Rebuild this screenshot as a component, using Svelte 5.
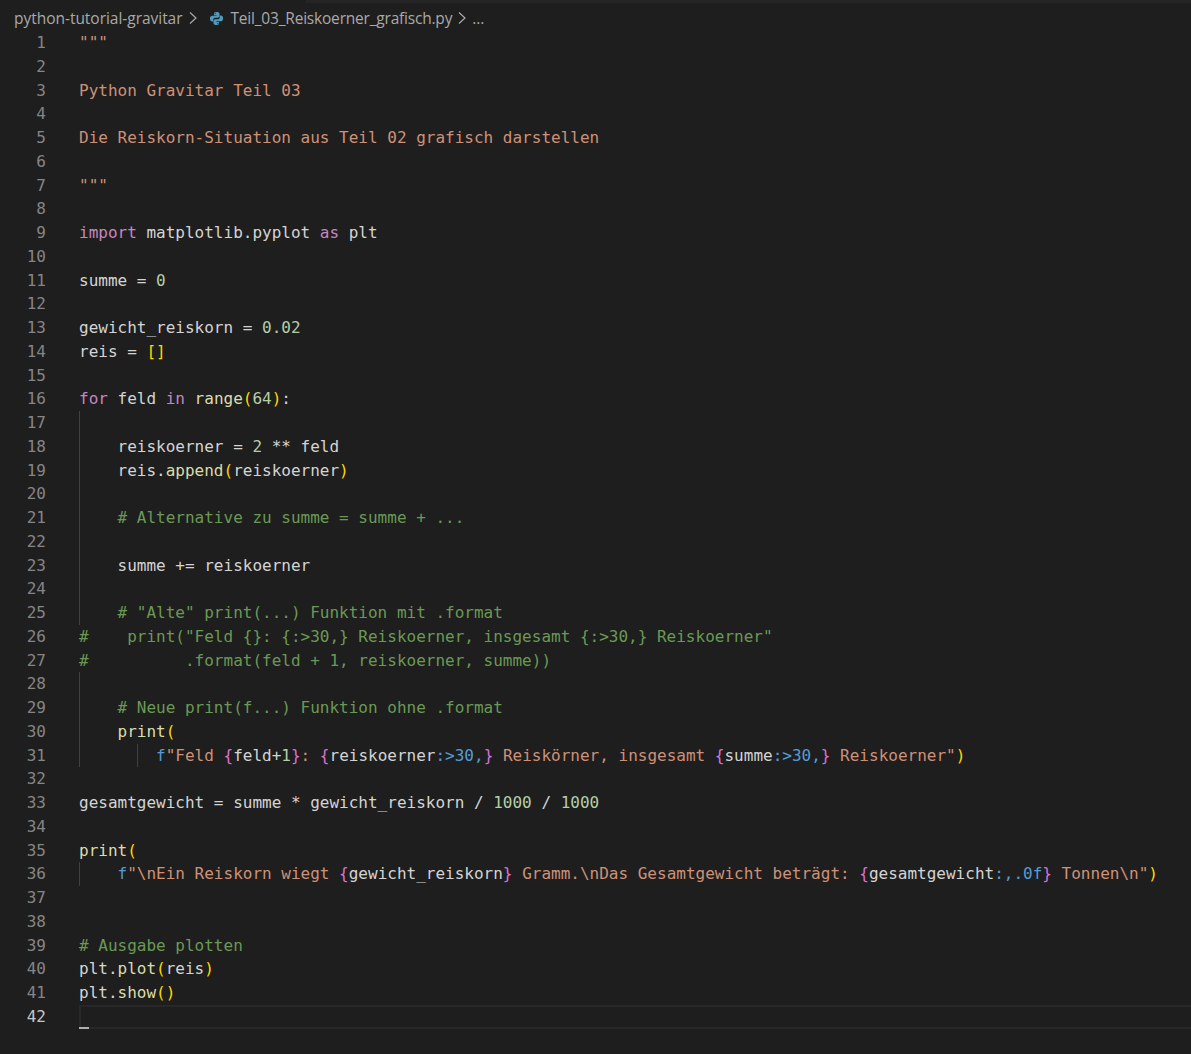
<script>
  const c = (t) => ['cm', t];
  const s = (t) => ['st', t];
  const o = (t) => ['tx', t];
  const k = (t) => ['kw', t];
  const f = (t) => ['fn', t];
  const n = (t) => ['nm', t];
  const g = (t) => ['gold', t];
  const p = (t) => ['pink', t];
  const b = (t) => ['blue', t];

  const lines = [
    { t: [s('"""')] },
    { t: [] },
    { t: [s('Python Gravitar Teil 03')] },
    { t: [] },
    { t: [s('Die Reiskorn-Situation aus Teil 02 grafisch darstellen')] },
    { t: [] },
    { t: [s('"""')] },
    { t: [] },
    { t: [k('import'), o(' matplotlib.pyplot '), k('as'), o(' plt')] },
    { t: [] },
    { t: [o('summe = '), n('0')] },
    { t: [] },
    { t: [o('gewicht_reiskorn = '), n('0.02')] },
    { t: [o('reis = '), g('[]')] },
    { t: [] },
    { t: [k('for'), o(' feld '), k('in'), o(' '), f('range'), g('('), n('64'), g(')'), o(':')] },
    { t: [], g: 1 },
    { t: [o('    reiskoerner = '), n('2'), o(' ** feld')], g: 1 },
    { t: [o('    reis.'), f('append'), g('('), o('reiskoerner'), g(')')], g: 1 },
    { t: [], g: 1 },
    { t: [c('    # Alternative zu summe = summe + ...')], g: 1 },
    { t: [], g: 1 },
    { t: [o('    summe += reiskoerner')], g: 1 },
    { t: [], g: 1 },
    { t: [c('    # "Alte" print(...) Funktion mit .format')], g: 1 },
    { t: [c('#    print("Feld {}: {:>30,} Reiskoerner, insgesamt {:>30,} Reiskoerner"')] },
    { t: [c('#          .format(feld + 1, reiskoerner, summe))')] },
    { t: [], g: 1 },
    { t: [c('    # Neue print(f...) Funktion ohne .format')], g: 1 },
    { t: [o('    '), f('print'), g('(')], g: 1 },
    {
      t: [
        o('        '), b('f'), s('"Feld '), p('{'), o('feld+'), n('1'), p('}'), s(': '),
        p('{'), o('reiskoerner'), b(':>30,'), p('}'), s(' Reiskörner, insgesamt '),
        p('{'), o('summe'), b(':>30,'), p('}'), s(' Reiskoerner"'), g(')')
      ],
      g: 1,
      g2: true
    },
    { t: [] },
    { t: [o('gesamtgewicht = summe * gewicht_reiskorn / '), n('1000'), o(' / '), n('1000')] },
    { t: [] },
    { t: [f('print'), g('(')] },
    {
      t: [
        o('    '), b('f'), s('"\\nEin Reiskorn wiegt '), p('{'), o('gewicht_reiskorn'), p('}'),
        s(' Gramm.\\nDas Gesamtgewicht beträgt: '), p('{'), o('gesamtgewicht'), b(':,.0f'), p('}'),
        s(' Tonnen\\n"'), g(')')
      ],
      g: 1
    },
    { t: [] },
    { t: [] },
    { t: [c('# Ausgabe plotten')] },
    { t: [o('plt.'), f('plot'), g('('), o('reis'), g(')')] },
    { t: [o('plt.'), f('show'), g('()')] },
    { t: [], active: true }
  ];
</script>

<div class="window">
  <div class="tabstrip"></div>
  <nav class="crumbs">
    <span>python-tutorial-gravitar</span>
    <svg class="chev" viewBox="0 0 10 16" width="10" height="16" aria-hidden="true">
      <path d="M2 2.5 L8 8 L2 13.5" fill="none" stroke="#a9a9a9" stroke-width="1.2" />
    </svg>
    <svg class="py" viewBox="0 0 16 16" width="15" height="15" aria-hidden="true">
      <path
        d="M7.9 1C5.4 1 5.3 2.1 5.3 2.9V4.4H8.1V5H3.4C2.1 5 1 6 1 8c0 2.1 1 3.1 2.2 3.1H4.5V9.4c0-1.2 1-2.2 2.2-2.2h2.7c1 0 1.8-.8 1.8-1.8V2.9C11.2 1.7 10.1 1 7.9 1ZM6.5 2.1a.6.6 0 1 1 0 1.2.6.6 0 0 1 0-1.2Z"
        fill="#519aba"
      />
      <path
        d="M8.1 15c2.5 0 2.6-1.1 2.6-1.9v-1.5H7.9V11h4.7c1.3 0 2.4-1 2.4-3 0-2.1-1-3.1-2.2-3.1h-1.3v1.7c0 1.2-1 2.2-2.2 2.2H6.6c-1 0-1.8.8-1.8 1.8v2.5c0 1.2 1.1 1.9 3.3 1.9Zm1.4-1.1a.6.6 0 1 1 0-1.2.6.6 0 0 1 0 1.2Z"
        fill="#519aba"
      />
    </svg>
    <span class="file">Teil_03_Reiskoerner_grafisch.py</span>
    <svg class="chev" viewBox="0 0 10 16" width="10" height="16" aria-hidden="true">
      <path d="M2 2.5 L8 8 L2 13.5" fill="none" stroke="#a9a9a9" stroke-width="1.2" />
    </svg>
    <span>...</span>
  </nav>

  <div class="editor">
    {#each lines as line, i}
      <div class="line" class:active={line.active}>
        <span class="num">{i + 1}</span>
        <span class="code" class:guide={line.g}>{#if line.g2}<i class="guide2"></i>{/if}{#each line.t as tok}<span class={tok[0]}>{tok[1]}</span>{/each}{#if line.active}<i class="cursor"></i>{/if}</span>
      </div>
    {/each}
  </div>
</div>

<style>
  :global(body) {
    margin: 0;
    background: #1e1e1e;
  }
  .window {
    height: 1054px;
    overflow: hidden;
    background: #1e1e1e;
    position: relative;
  }
  .tabstrip {
    position: absolute;
    top: 0;
    left: 306px;
    right: 0;
    height: 3px;
    background: #252526;
  }
  .crumbs {
    height: 31px;
    padding: 5px 0 0 14px;
    box-sizing: border-box;
    display: flex;
    align-items: center;
    gap: 5px;
    font-family: "Open Sans", "Noto Sans", sans-serif;
    font-size: 15.5px;
    letter-spacing: -0.03px;
    color: #a9a9a9;
    white-space: nowrap;
  }
  .py {
    margin-left: 6px;
    margin-right: 2px;
  }
  .file {
    letter-spacing: -0.2px;
  }
  .editor {
    font-family: "DejaVu Sans Mono", monospace;
    font-size: 16px;
    color: #d4d4d4;
  }
  .line {
    display: flex;
    height: 23.76px;
    line-height: 23.76px;
    white-space: pre;
  }
  .num {
    width: 46px;
    text-align: right;
    color: #858585;
    margin-right: 33px;
    flex: none;
  }
  .code {
    flex: 1;
    position: relative;
    min-width: 0;
  }
  .guide {
    box-shadow: inset 1px 0 0 #404040;
  }
  .guide2 {
    position: absolute;
    left: 58px;
    top: 0;
    bottom: 0;
    width: 1px;
    background: #404040;
  }
  .active .num {
    color: #c6c6c6;
  }
  .active .code {
    box-sizing: border-box;
    border: 2px solid #282828;
    border-right: none;
  }
  .cursor {
    position: absolute;
    left: -2px;
    bottom: -2px;
    width: 10px;
    height: 2px;
    background: #aeafad;
  }
  .cm { color: #6a9955; }
  .st { color: #ce9178; }
  .tx { color: #d4d4d4; }
  .kw { color: #c586c0; }
  .fn { color: #dcdcaa; }
  .nm { color: #b5cea8; }
  .gold { color: #ffd700; }
  .pink { color: #da70d6; }
  .blue { color: #569cd6; }
</style>
